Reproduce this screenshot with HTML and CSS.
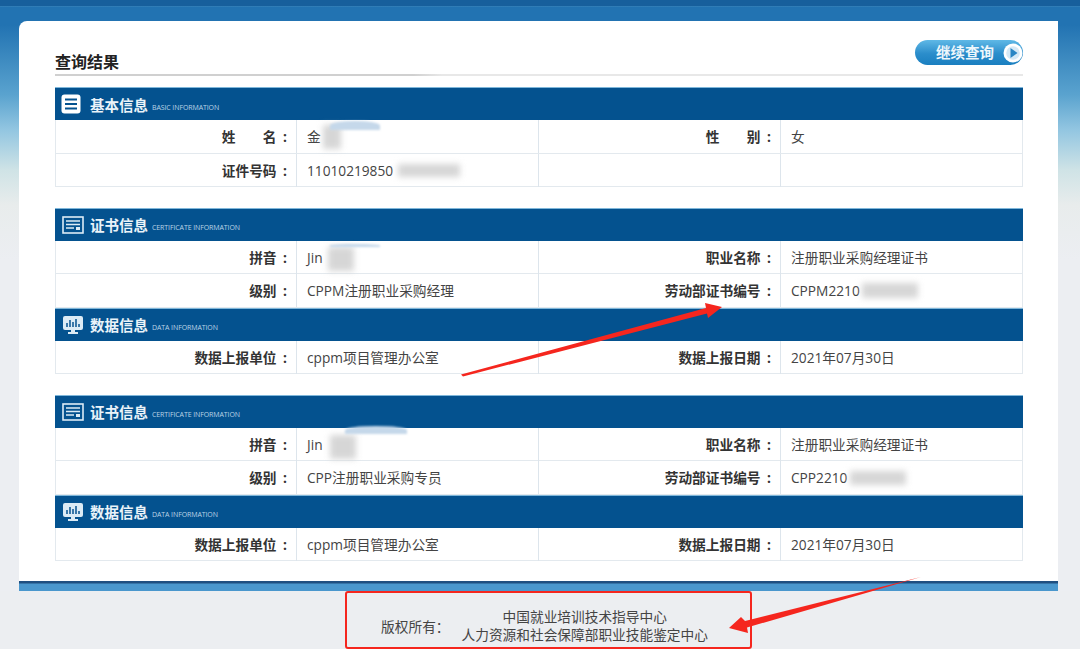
FILE: index.html
```html
<!DOCTYPE html>
<html lang="zh-CN">
<head>
  <meta charset="UTF-8" />
  <title>查询结果</title>
  <link rel="stylesheet" href="styles.css">
</head>
<body>
  <div class="page">
    <div class="card">
      <div class="title-row">
        <h1>查询结果</h1>
        <a class="more-btn" href="#">继续查询
          <svg class="play" viewBox="0 0 20 20" width="20" height="20"><circle cx="10" cy="10" r="9.500" fill="#fff"/><circle cx="10" cy="10" r="6.800" fill="#d5e9f6"/><path d="M7.500 5l7 5-7 5z" fill="#2a86c4"/></svg>
        </a>
      </div>

      <div class="block">
        <div class="bar">
          <svg class="ico" viewBox="0 0 20 20" width="20" height="20"><rect x="0.5" y="0.5" width="19" height="19" rx="3" fill="#fff"/><path d="M4 5.500h12M4 10h12M4 14.500h12" stroke="#04528f" stroke-width="2"/></svg>
          <span class="bar-cn">基本信息</span><span class="bar-en">BASIC INFORMATION</span>
        </div>
        <div class="row"><div class="lab">姓&emsp;&emsp;名 :</div><div class="val">金</div><div class="lab">性&emsp;&emsp;别 :</div><div class="val">女</div></div>
        <div class="row"><div class="lab">证件号码 :</div><div class="val">11010219850</div><div class="lab"></div><div class="val"></div></div>
      </div>

      <div class="block">
        <div class="bar">
          <svg class="ico wide" viewBox="0 0 22 18" width="22" height="18"><rect x="1" y="1" width="20" height="16" fill="none" stroke="#dcebf5" stroke-width="1.600"/><path d="M4 5h14M4 8.500h14M4 12h8" stroke="#dcebf5" stroke-width="1.600"/><rect x="14" y="11" width="4" height="3" fill="#dcebf5"/></svg>
          <span class="bar-cn">证书信息</span><span class="bar-en">CERTIFICATE INFORMATION</span>
        </div>
        <div class="row"><div class="lab">拼音 :</div><div class="val">Jin</div><div class="lab">职业名称 :</div><div class="val">注册职业采购经理证书</div></div>
        <div class="row"><div class="lab">级别 :</div><div class="val">CPPM注册职业采购经理</div><div class="lab">劳动部证书编号 :</div><div class="val">CPPM2210</div></div>
        <div class="bar">
          <svg class="ico wide" viewBox="0 0 22 20" width="22" height="20"><rect x="1" y="1" width="20" height="14" rx="2" fill="#dcebf5"/><path d="M5 12V8M8 12V5M11 12V7M14 12V4M17 12V9" stroke="#04528f" stroke-width="1.500"/><path d="M9 15h4v2h3v2H6v-2h3z" fill="#dcebf5"/></svg>
          <span class="bar-cn">数据信息</span><span class="bar-en">DATA INFORMATION</span>
        </div>
        <div class="row"><div class="lab">数据上报单位 :</div><div class="val">cppm项目管理办公室</div><div class="lab">数据上报日期 :</div><div class="val">2021年07月30日</div></div>
      </div>

      <div class="block">
        <div class="bar">
          <svg class="ico wide" viewBox="0 0 22 18" width="22" height="18"><rect x="1" y="1" width="20" height="16" fill="none" stroke="#dcebf5" stroke-width="1.600"/><path d="M4 5h14M4 8.500h14M4 12h8" stroke="#dcebf5" stroke-width="1.600"/><rect x="14" y="11" width="4" height="3" fill="#dcebf5"/></svg>
          <span class="bar-cn">证书信息</span><span class="bar-en">CERTIFICATE INFORMATION</span>
        </div>
        <div class="row"><div class="lab">拼音 :</div><div class="val">Jin</div><div class="lab">职业名称 :</div><div class="val">注册职业采购经理证书</div></div>
        <div class="row"><div class="lab">级别 :</div><div class="val">CPP注册职业采购专员</div><div class="lab">劳动部证书编号 :</div><div class="val">CPP2210</div></div>
        <div class="bar">
          <svg class="ico wide" viewBox="0 0 22 20" width="22" height="20"><rect x="1" y="1" width="20" height="14" rx="2" fill="#dcebf5"/><path d="M5 12V8M8 12V5M11 12V7M14 12V4M17 12V9" stroke="#04528f" stroke-width="1.500"/><path d="M9 15h4v2h3v2H6v-2h3z" fill="#dcebf5"/></svg>
          <span class="bar-cn">数据信息</span><span class="bar-en">DATA INFORMATION</span>
        </div>
        <div class="row"><div class="lab">数据上报单位 :</div><div class="val">cppm项目管理办公室</div><div class="lab">数据上报日期 :</div><div class="val">2021年07月30日</div></div>
      </div>
    </div>
    <div class="card-foot"></div>
  </div>

  <div class="footer">
    <span>版权所有：</span>
    <div class="footer-lines">中国就业培训技术指导中心<br>人力资源和社会保障部职业技能鉴定中心</div>
  </div>

  <!-- mosaic patches over the personal data -->
  <div class="smudge" style="left:323px;top:125px;width:18px;height:24px"></div>
  <div class="smudge" style="left:398px;top:164px;width:62px;height:13px"></div>
  <div class="smudge" style="left:328px;top:247px;width:26px;height:24px"></div>
  <div class="smudge" style="left:862px;top:283px;width:56px;height:15px"></div>
  <div class="smudge" style="left:330px;top:435px;width:26px;height:24px"></div>
  <div class="smudge" style="left:850px;top:471px;width:56px;height:14px"></div>
  <div class="streak" style="left:330px;top:121px;width:50px;height:9px"></div>
  <div class="streak" style="left:330px;top:244px;width:50px;height:3px"></div>
  <div class="streak" style="left:345px;top:426px;width:62px;height:8px"></div>

  <div class="red-box"></div>
  <svg class="arrows" viewBox="0 0 1080 649" width="1080" height="649">
    <path d="M461 374.500L706 308L705 303L722 307L708 318L707 313.500L463 376.500Z" fill="#f5261e"/>
    <path d="M921 577L745 621L741 617L729 628L748 633L747 627.500Z" fill="#f5261e"/>
  </svg>
</body>
</html>
```

FILE: styles.css
```css
* {
  box-sizing: border-box;
}
html,
body {
  height: 649px;
  overflow: hidden;
}
body {
  margin: 0;
  font-family: "Open Sans", "Noto Sans CJK SC", sans-serif;
  font-size: 13.7px;
  color: #333;
  background: #eceef1;
  position: relative;
}
.page {
  height: 591px;
  padding: 21px 22px 0 19px;
  background: linear-gradient(#175f9c 0, #175f9c 6px, #3d86bb 6px, #2273b2 7px, #2273b2 25px, #5aa3cf 95px, #93c6e1 130px, #cfe3e6 170px, #e8ecec 205px, #eceef2 260px);
}
.card {
  height: 560px;
  padding: 18px 35px 0 36px;
  background: #fff;
  border-radius: 8px 0 0 0;
}
.card-foot {
  height: 10px;
  background: linear-gradient(#1f4f80 0, #1f4f80 2px, #4a97cd 3px);
}
.title-row {
  display: flex;
  justify-content: space-between;
  align-items: flex-start;
  height: 37px;
  border-bottom: 2px solid #e4e4e4;
  border-image: linear-gradient(90deg, #d0d0d0, #d0d0d0 37%, #e8e8e8 40%) 1;
  margin-bottom: 11px;
}
h1 {
  margin: 13px 0 0;
  font-size: 16px;
  line-height: 20px;
  font-weight: bold;
  color: #222;
}
.more-btn {
  display: flex;
  align-items: center;
  justify-content: space-between;
  width: 108px;
  height: 25px;
  margin-top: 1px;
  padding: 0 0 0 21px;
  border-radius: 13px;
  background: linear-gradient(#5fb8e6, #2b8dcb 55%, #1a7fc0);
  color: #eef7fc;
  font-size: 14.5px;
  line-height: 22px;
  font-weight: bold;
  text-decoration: none;
}
.block {
  margin-bottom: 20.5px;
  border-left: 1px solid #e3e9ee;
  border-right: 1px solid #e3e9ee;
}
.bar {
  display: flex;
  align-items: center;
  height: 33px;
  margin: 0 -1px;
  padding-left: 6px;
  background: #04528f;
  color: #eaf3f9;
  border-top: 1px solid #7fb7da;
}
.ico {
  flex: none;
  margin-right: 9px;
}
.ico.wide {
  margin-left: 1px;
  margin-right: 6px;
}
.bar-cn {
  font-size: 14.5px;
  font-weight: bold;
}
.bar-en {
  margin-left: 4px;
  margin-top: 6px;
  font-size: 7px;
  letter-spacing: -0.1px;
  color: #bcd4e6;
}
.row {
  display: grid;
  grid-template-columns: 241px 242px 242px 1fr;
  height: 33.5px;
  border-bottom: 1px solid #e3e9ee;
}
.lab {
  padding-right: 9px;
  text-align: right;
  font-weight: bold;
  line-height: 33px;
  word-spacing: 3px;
  color: #333;
  border-right: 1px solid #dde5ec;
}
.val {
  padding-left: 10px;
  line-height: 33px;
  color: #444;
  border-right: 1px solid #dde5ec;
}
.val:last-child {
  border-right: none;
}
.footer {
  display: flex;
  align-items: center;
  justify-content: center;
  gap: 12px;
  height: 58px;
  padding: 12px 0 0 9px;
  color: #444;
  font-size: 13.7px;
}
.footer-lines {
  text-align: center;
  line-height: 18px;
}
.smudge {
  position: absolute;
  background: #d6d6d6;
  filter: blur(3px);
}
.streak {
  position: absolute;
  background: #c5d8ea;
  border-radius: 50% 50% 0 0;
  filter: blur(1px);
}
.red-box {
  position: absolute;
  left: 345px;
  top: 591px;
  width: 407px;
  height: 58px;
  border: 2.500px solid #f5261e;
  border-radius: 3px;
}
.arrows {
  position: absolute;
  left: 0;
  top: 0;
  pointer-events: none;
}
```
